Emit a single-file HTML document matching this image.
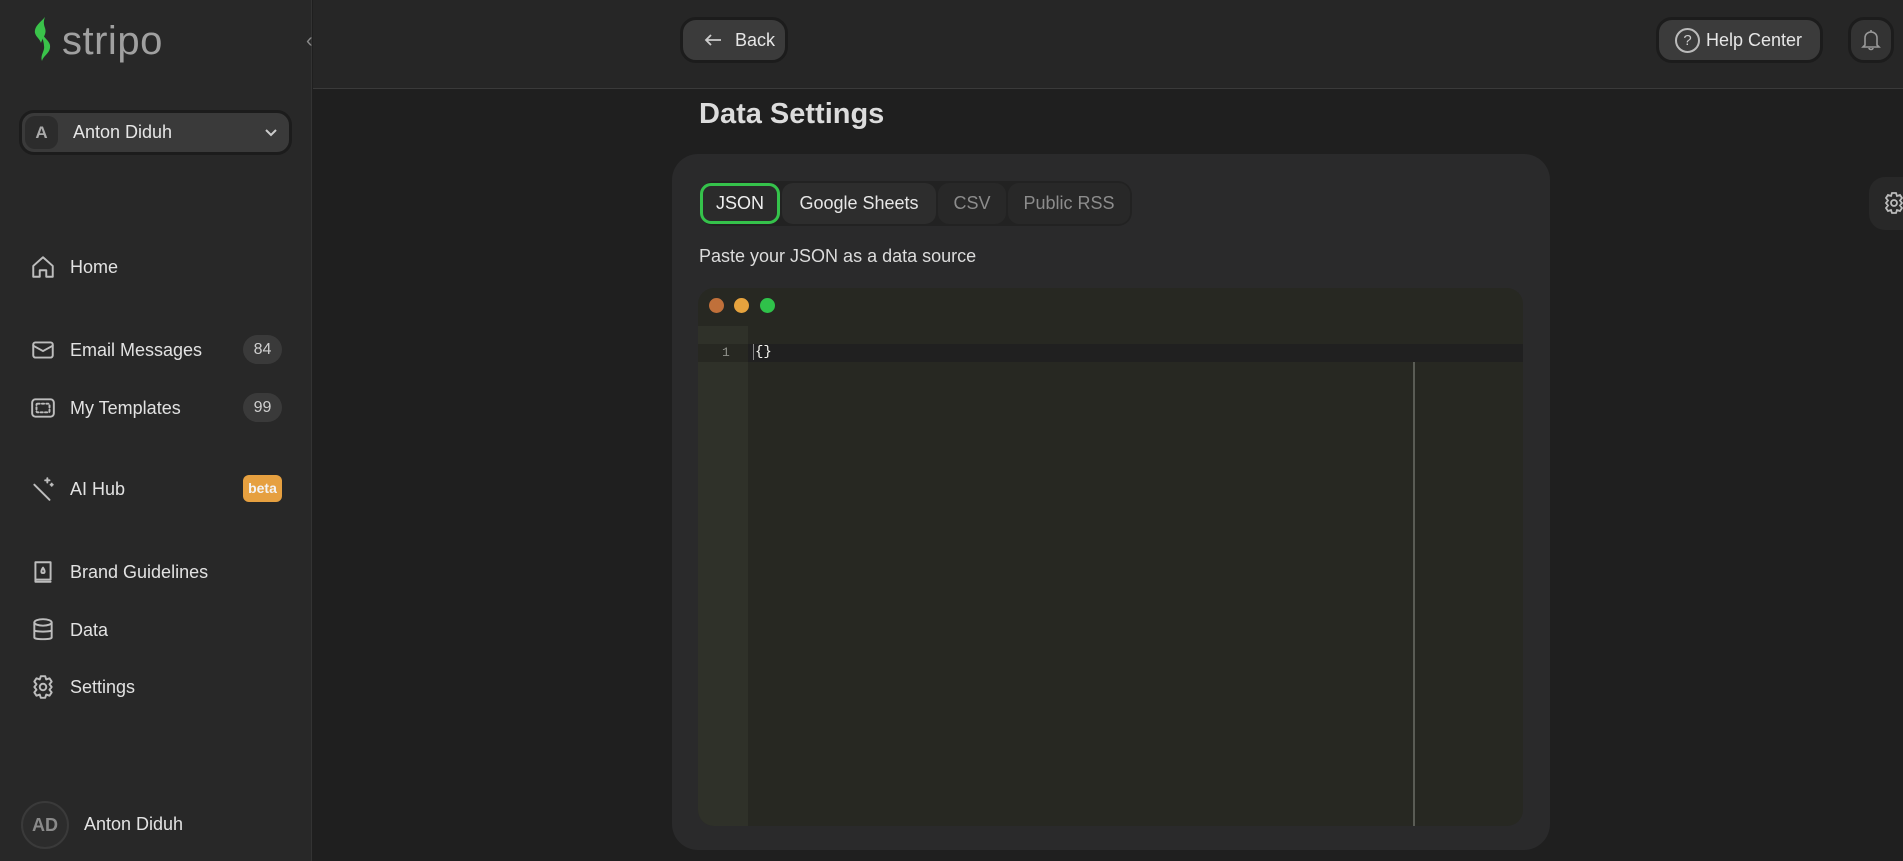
<!DOCTYPE html>
<html><head><meta charset="utf-8"><style>
*{box-sizing:border-box;margin:0;padding:0}
body{width:1903px;height:861px;overflow:hidden;background:#1f1f1f;font-family:"Liberation Sans",sans-serif;color:#e6e6e6;position:relative}
.sb{position:absolute;left:0;top:0;width:312px;height:861px;background:#282828;border-right:1px solid #333}
.top{position:absolute;left:313px;top:0;right:0;height:89px;background:#262626;border-bottom:1px solid #3a3a3a}
.btn{position:absolute;background:#3b3b3b;border:3px solid #1c1c1c;border-radius:16px;color:#e6e6e6;font-size:18px;display:flex;align-items:center}
.nav{position:absolute;left:30px;display:flex;align-items:center;font-size:18px;color:#e2e2e2}
.nav svg{width:26px;height:26px;margin-right:14px;stroke:#bdbdbd;fill:none;stroke-width:1.8;stroke-linecap:round;stroke-linejoin:round}
.badge{position:absolute;left:243px;width:39px;height:29px;border-radius:15px;background:#3a3a3a;color:#cfcfcf;font-size:16px;text-align:center;line-height:29px}
.card{position:absolute;left:672px;top:154px;width:878px;height:696px;background:#2a2a2b;border-radius:26px}
.tabs{position:absolute;left:700px;top:181px;height:45px;width:432px;background:#222;border-radius:14px}
.tab{position:absolute;top:2px;height:41px;border-radius:11px;font-size:18px;line-height:41px;text-align:center}
.ed{position:absolute;left:698px;top:288px;width:825px;height:538px;background:#272822;border-radius:16px;overflow:hidden}
</style></head><body>
<div class="sb">
  <svg style="position:absolute;left:31px;top:16px" width="24" height="46" viewBox="0 0 24 46"><path d="M14 1 C10 6 3 10 4 17 C5 21 9 23 10 27 C12 21 16 18 14 12 C13 9 12 6 14 1 Z" fill="#3ac34a"/><path d="M12 19 C15 24 20 26 19 32 C18 38 12 40 11 45 C9 39 14 35 13 30 C13 26 11 23 12 19 Z" fill="#3ac34a"/></svg>
  <div style="position:absolute;left:62px;top:19px;font-size:40px;color:#a0a0a0;letter-spacing:0.5px">stripo</div>
  <div style="position:absolute;left:306px;top:30px;color:#888;font-size:20px">‹</div>
  <div style="position:absolute;left:19px;top:110px;width:273px;height:45px;border:3px solid #1c1c1c;border-radius:15px;background:#3a3a3a">
    <div style="position:absolute;left:3px;top:3px;width:33px;height:33px;border-radius:10px;background:#2c2c2c;color:#aaa;font-weight:bold;font-size:17px;text-align:center;line-height:33px">A</div>
    <div style="position:absolute;left:51px;top:9px;font-size:18px;color:#e6e6e6">Anton Diduh</div>
    <svg style="position:absolute;right:10px;top:14px" width="16" height="12" viewBox="0 0 16 12"><path d="M3 3 L8 8 L13 3" stroke="#ccc" stroke-width="2" fill="none"/></svg>
  </div>
  <div class="nav" style="top:254px"><svg viewBox="0 0 24 24"><path d="M3 11 L12 3 L21 11 V21 H15 V15 H9 V21 H3 Z"/></svg>Home</div>
  <div class="nav" style="top:337px"><svg viewBox="0 0 24 24"><rect x="3" y="5" width="18" height="14" rx="2"/><path d="M3 8 L12 13 L21 8"/></svg>Email Messages</div>
  <div class="badge" style="top:335px">84</div>
  <div class="nav" style="top:395px"><svg viewBox="0 0 24 24"><rect x="2" y="4" width="20" height="16" rx="3"/><rect x="6" y="8" width="12" height="8" rx="1" stroke-dasharray="2 2"/></svg>My Templates</div>
  <div class="badge" style="top:393px">99</div>
  <div class="nav" style="top:476px"><svg viewBox="0 0 24 24"><path d="M4 8 L18 22"/><path d="M16 2 V6 M14 4 H18 M20 7 V9 M19 8 H21"/></svg>AI Hub</div>
  <div class="badge" style="top:475px;background:#e6a040;color:#f3f3f3;font-weight:bold;font-size:14px;border-radius:6px;height:27px;line-height:27px">beta</div>
  <div class="nav" style="top:559px"><svg viewBox="0 0 24 24"><path d="M5 3 H19 V19 H5 Z M5 19 V21 H19"/><path d="M12 8 C10 11 10 13 12 13 C14 13 14 11 12 8Z"/></svg>Brand Guidelines</div>
  <div class="nav" style="top:617px"><svg viewBox="0 0 24 24"><ellipse cx="12" cy="5" rx="8" ry="3"/><path d="M4 5 V19 C4 21 20 21 20 19 V5 M4 12 C4 14 20 14 20 12"/></svg>Data</div>
  <div class="nav" style="top:674px"><svg viewBox="0 0 24 24"><circle cx="12" cy="12" r="3"/><path d="M10 2 H14 L15 5 L18 4 L20 7 L18 9.5 L20 12 L18 14.5 L20 17 L18 20 L15 19 L14 22 H10 L9 19 L6 20 L4 17 L6 14.5 L4 12 L6 9.5 L4 7 L6 4 L9 5 Z"/></svg>Settings</div>
  <div style="position:absolute;left:21px;top:801px;width:48px;height:48px;border-radius:50%;border:2px solid #3a3a3a;background:#2c2c2c;color:#8a8a8a;font-weight:bold;font-size:18px;text-align:center;line-height:44px">AD</div>
  <div style="position:absolute;left:84px;top:814px;font-size:18px;color:#e2e2e2">Anton Diduh</div>
</div>
<div class="top"></div>
<div class="btn" style="left:680px;top:17px;width:108px;height:46px;padding-left:20px"><svg width="20" height="14" viewBox="0 0 20 14" style="margin-right:12px"><path d="M18 7 H3 M8 2 L3 7 L8 12" stroke="#ccc" stroke-width="1.8" fill="none"/></svg>Back</div>
<div class="btn" style="left:1656px;top:17px;width:167px;height:46px;padding-left:16px"><span style="display:inline-block;width:25px;height:25px;border:2px solid #bbb;border-radius:50%;text-align:center;line-height:21px;font-size:15px;margin-right:6px;color:#ccc">?</span>Help Center</div>
<div class="btn" style="left:1848px;top:17px;width:46px;height:46px;background:#333;justify-content:center"><svg width="20" height="22" viewBox="0 0 20 22"><path d="M4 16 V9 C4 5 7 3 10 3 C13 3 16 5 16 9 V16 L18 18 H2 Z M8 19 C8 21 12 21 12 19 M10 1 V3" stroke="#999" stroke-width="1.6" fill="none"/></svg></div>
<div style="position:absolute;left:1869px;top:177px;width:60px;height:53px;border-radius:16px;background:#282828"></div>
<svg style="position:absolute;left:1882px;top:191px" width="24" height="24" viewBox="0 0 24 24"><circle cx="12" cy="12" r="3" stroke="#bbb" stroke-width="1.8" fill="none"/><path d="M10 2 H14 L15 5 L18 4 L20 7 L18 9.5 L20 12 L18 14.5 L20 17 L18 20 L15 19 L14 22 H10 L9 19 L6 20 L4 17 L6 14.5 L4 12 L6 9.5 L4 7 L6 4 L9 5 Z" stroke="#bbb" stroke-width="1.8" fill="none"/></svg>
<div style="position:absolute;left:699px;top:98px;font-size:29px;font-weight:bold;color:#dcdcdc">Data Settings</div>
<div class="card"></div>
<div class="tabs">
  <div class="tab" style="left:0;width:80px;border:3px solid #35c24b;background:#2b2b2b;color:#eee;line-height:35px">JSON</div>
  <div class="tab" style="left:82px;width:154px;background:#2d2d2d;color:#e6e6e6">Google Sheets</div>
  <div class="tab" style="left:238px;width:68px;background:#282828;color:#8c8c8c">CSV</div>
  <div class="tab" style="left:308px;width:122px;background:#282828;color:#8c8c8c">Public RSS</div>
</div>
<div style="position:absolute;left:699px;top:246px;font-size:18px;color:#dcdcdc">Paste your JSON as a data source</div>
<div class="ed">
  <div style="position:absolute;left:11px;top:10px;width:15px;height:15px;border-radius:50%;background:#c0703a"></div>
  <div style="position:absolute;left:36px;top:10px;width:15px;height:15px;border-radius:50%;background:#e6a33e"></div>
  <div style="position:absolute;left:62px;top:10px;width:15px;height:15px;border-radius:50%;background:#2fc24a"></div>
  <div style="position:absolute;left:0;top:38px;width:50px;height:500px;background:#2f3129"></div>
  <div style="position:absolute;left:0;top:56px;width:825px;height:18px;background:#202020"></div>
  <div style="position:absolute;left:0;top:56px;width:50px;height:18px;background:#272822"></div>
  <div style="position:absolute;left:24px;top:57px;font-family:'Liberation Mono',monospace;font-size:13px;color:#8f908a">1</div>
  <div style="position:absolute;left:55px;top:56px;font-family:'Liberation Mono',monospace;font-size:14px;color:#f8f8f2;border-left:1px solid #888;padding-left:1px">{}</div>
  <div style="position:absolute;left:715px;top:74px;width:2px;height:470px;background:#5a5c55"></div>
</div>
</body></html>
